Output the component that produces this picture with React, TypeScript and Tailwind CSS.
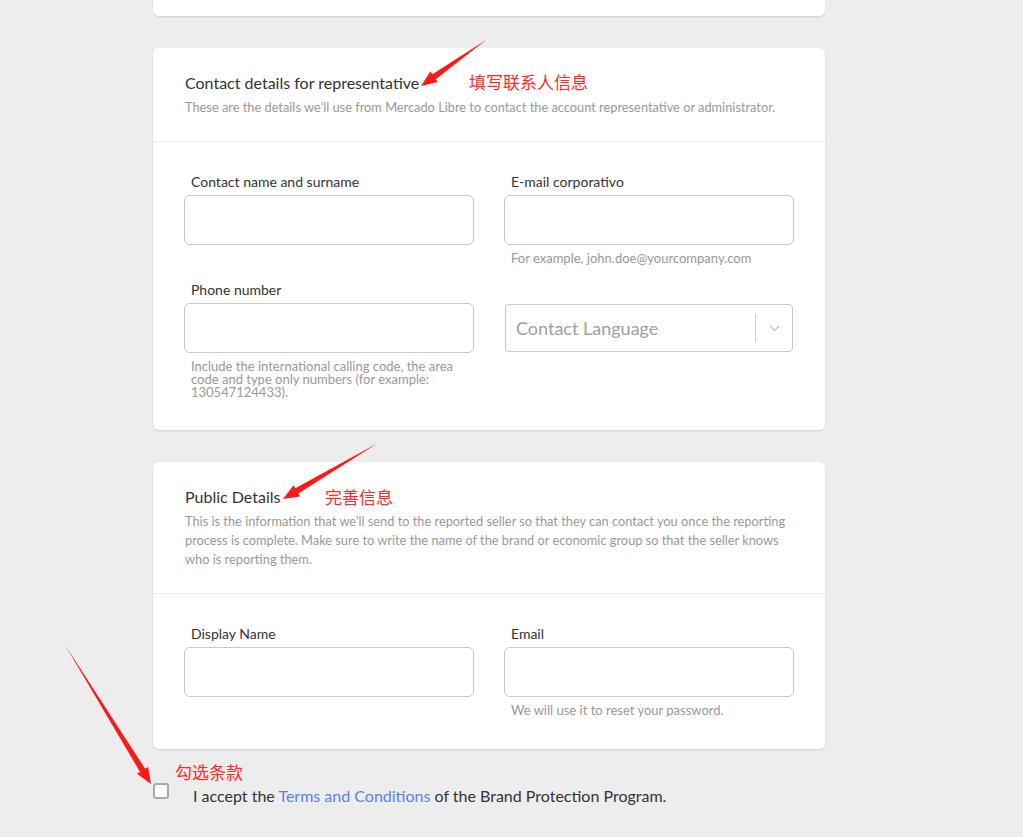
import React from "react";

const font = { fontFamily: "Lato, 'Noto Sans', sans-serif" };
const cjk = { fontFamily: "'Noto Sans CJK SC', sans-serif" };

function arrowPoints(x1: number, y1: number, x2: number, y2: number, head: number, headW: number, shaftW: number) {
  const dx = x2 - x1;
  const dy = y2 - y1;
  const len = Math.hypot(dx, dy);
  const ux = dx / len;
  const uy = dy / len;
  const nx = -uy;
  const ny = ux;
  const bx = x2 - ux * head;
  const by = y2 - uy * head;
  const pts = [
    [x1, y1],
    [bx + nx * shaftW, by + ny * shaftW],
    [bx + nx * headW, by + ny * headW],
    [x2, y2],
    [bx - nx * headW, by - ny * headW],
    [bx - nx * shaftW, by - ny * shaftW],
  ];
  return pts.map((p) => p.join(",")).join(" ");
}

function Field({ label, help }: { label: string; help?: string }) {
  return (
    <div className="flex flex-col">
      <label className="pl-[7px] text-[14px] leading-[17px] text-[#333]">{label}</label>
      <div className="mt-[5px] h-[50px] rounded-[6px] border border-[#c7c7c7] bg-white" />
      {help && (
        <p className="mt-[7px] pl-[7px] pr-[10px] text-[13px] leading-[13px] text-[#999]">{help}</p>
      )}
    </div>
  );
}

export default function App() {
  return (
    <div className="relative min-h-[837px] w-full overflow-hidden bg-[#ededed]" style={font}>
      <div className="ml-[153px] w-[672px] pb-[40px]">
        {/* previous card tail */}
        <div className="h-[16px] rounded-b-[6px] bg-white shadow-[0_1px_2px_rgba(0,0,0,0.12)]" />

        {/* Contact details */}
        <section className="mt-[32px] rounded-[6px] bg-white shadow-[0_1px_2px_rgba(0,0,0,0.12)]">
          <div className="pl-[32px] pr-[28px] pt-[24px] pb-[24px] border-b border-[#eeeeee]">
            <h2 className="text-[16px] leading-[22px] text-[#333]">Contact details for representative</h2>
            <p className="mt-[4px] text-[12.8px] leading-[19px] text-[#999]">
              These are the details we’ll use from Mercado Libre to contact the account representative or administrator.
            </p>
          </div>
          <div className="grid grid-cols-2 gap-x-[30px] gap-y-[16px] px-[31px] pt-[31px] pb-[31px]">
            <Field label="Contact name and surname" />
            <Field label="E-mail corporativo" help="For example, john.doe@yourcompany.com" />
            <Field
              label="Phone number"
              help="Include the international calling code, the area code and type only numbers (for example: 130547124433)."
            />
            <div className="pt-[23px] pl-[1px] pr-[1px]">
              <div className="flex h-[48px] items-center rounded-[4px] border border-[#c7c7c7] bg-white">
                <span className="flex-1 pl-[10px] text-[18px] text-[#a0a0a0]">Contact Language</span>
                <span className="h-[28px] w-px bg-[#cccccc]" />
                <span className="flex w-[36px] justify-center">
                  <svg width="11" height="7" viewBox="0 0 11 7" fill="none">
                    <path d="M1 1l4.5 4.5L10 1" stroke="#c2c2c2" strokeWidth="1.3" />
                  </svg>
                </span>
              </div>
            </div>
          </div>
        </section>

        {/* Public details */}
        <section className="mt-[32px] rounded-[6px] bg-white shadow-[0_1px_2px_rgba(0,0,0,0.12)]">
          <div className="pl-[32px] pr-[28px] pt-[24px] pb-[24px] border-b border-[#eeeeee]">
            <h2 className="text-[16px] leading-[22px] text-[#333]">Public Details</h2>
            <p className="mt-[4px] text-[12.8px] leading-[19px] text-[#999]">
              This is the information that we'll send to the reported seller so that they can contact you once the reporting process is complete. Make sure to write the name of the brand or economic group so that the seller knows who is reporting them.
            </p>
          </div>
          <div className="grid grid-cols-2 gap-x-[30px] px-[31px] pt-[31px] pb-[32px]">
            <Field label="Display Name" />
            <Field label="Email" help="We will use it to reset your password." />
          </div>
        </section>

        {/* Terms */}
        <div className="mt-[34px] flex items-start">
          <span className="h-[16px] w-[16px] shrink-0 rounded-[3px] border-2 border-[#aaaaaa] bg-white" />
          <p className="ml-[24px] mt-[3px] text-[16px] leading-[20px] text-[#333]">
            I accept the <span className="text-[#5a80f5]">Terms and Conditions</span> of the Brand Protection Program.
          </p>
        </div>
      </div>

      {/* annotations */}
      <svg className="pointer-events-none absolute left-0 top-0" width="1023" height="837">
        <polygon points={arrowPoints(486, 40, 421, 86, 16, 6.5, 3)} fill="#ff1a1a" />
        <polygon points={arrowPoints(378, 443, 283, 499, 16, 6.5, 3)} fill="#ff1a1a" />
        <polygon points={arrowPoints(65, 645, 151, 784, 16, 6.5, 3)} fill="#ff1a1a" />
      </svg>
      <span className="absolute left-[469px] top-[70px] text-[17px] leading-[24px] text-[#ff2a2a]" style={cjk}>
        填写联系人信息
      </span>
      <span className="absolute left-[325px] top-[485px] text-[17px] leading-[24px] text-[#ff2a2a]" style={cjk}>
        完善信息
      </span>
      <span className="absolute left-[175px] top-[760px] text-[17px] leading-[24px] text-[#ff2a2a]" style={cjk}>
        勾选条款
      </span>
    </div>
  );
}
